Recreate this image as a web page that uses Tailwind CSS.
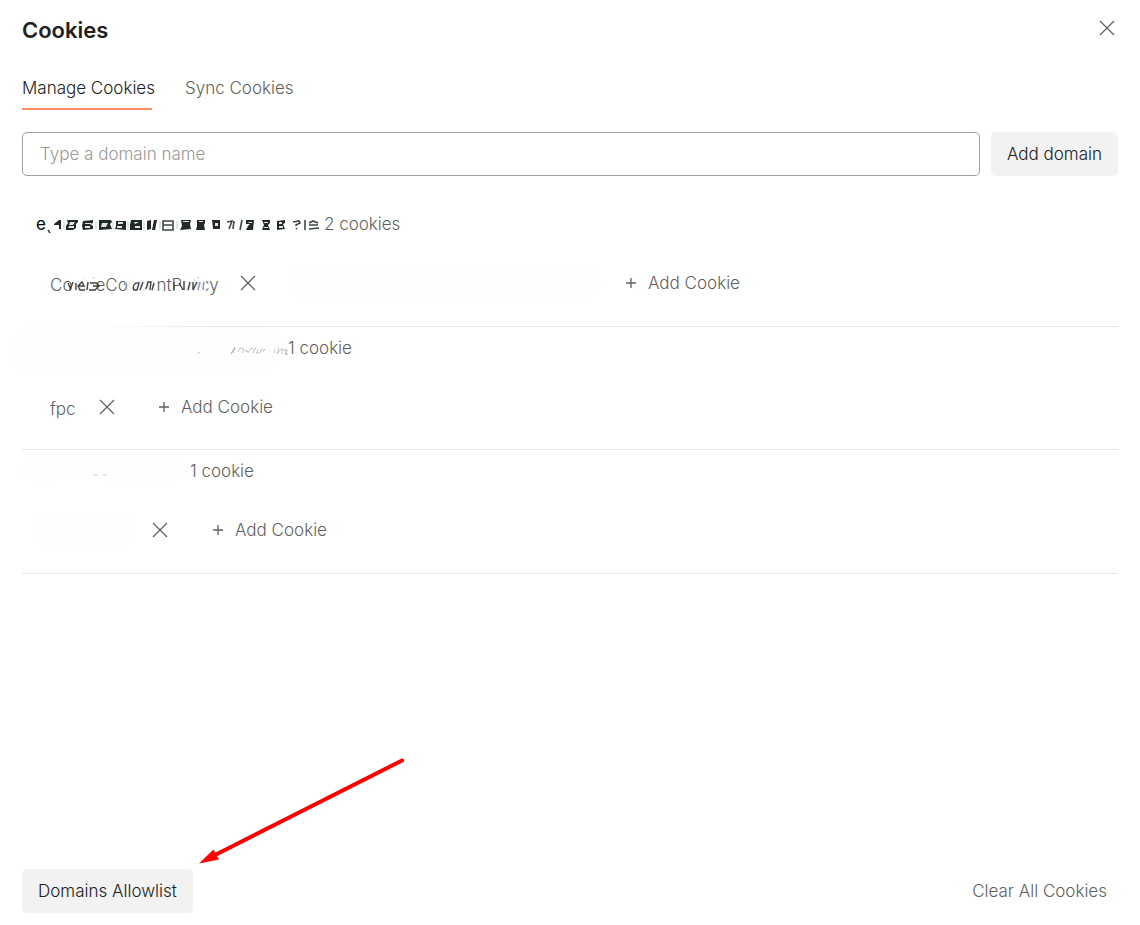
<!DOCTYPE html>
<html lang="en">
<head>
<meta charset="utf-8">
<meta name="viewport" content="width=device-width, initial-scale=1">
<title>Cookies</title>
<script src="https://cdn.jsdelivr.net/npm/@tailwindcss/browser@4"></script>
</head>
<body class="bg-white">
<svg class="hidden" aria-hidden="true">
  <symbol id="close" viewBox="0 0 16 16"><path d="M1 1L15 15M15 1L1 15" fill="none" stroke="currentColor" stroke-width="1.2"/></symbol>
  <symbol id="plus" viewBox="0 0 12 12"><path d="M6 1V11M1 6H11" fill="none" stroke="currentColor" stroke-width="1.3"/></symbol>
</svg>
<main class="relative flex min-h-screen flex-col bg-white px-[22px] pt-4 pb-3 font-['Inter',sans-serif] text-[17px] leading-6 font-light text-[#5f5f5f]">
  <header class="flex items-start justify-between">
    <h1 class="text-[22px] leading-7 font-semibold text-[#212121]">Cookies</h1>
    <button class="py-1 pr-[3px] pl-1" aria-label="Close"><svg class="size-4"><use href="#close"/></svg></button>
  </header>

  <nav class="mt-8 flex gap-[33px] whitespace-nowrap">
    <a href="#manage" class="w-[130px] border-b-2 border-[#ff8a65] pb-2 text-[#212121]" aria-current="page">Manage Cookies</a>
    <a href="#sync">Sync Cookies</a>
  </nav>

  <form class="mt-[22px] flex gap-[11px]">
    <input type="text" aria-label="Domain name" placeholder="Type a domain name" class="h-11 min-w-0 flex-1 rounded-[5px] border border-[#a0a0a0] px-[17px] text-[#212121] placeholder:text-[#999]">
    <button type="button" class="h-11 rounded-[5px] bg-[#f2f2f2] px-4 text-[#212121]">Add domain</button>
  </form>

  <div class="mt-[27px]">
    <section class="border-b border-[#e6e6e6] pt-[9px] pb-[31px]">
      <div class="flex items-center pl-[14px]">
        <span class="font-normal text-black">e</span>
        <svg class="mr-[3px] h-6 w-[275px]" viewBox="46 212 275 24" role="img" aria-label="Hidden domain">
          <g class="blur-[0.4px]">
            <path fill="#222a27" d="M54 224l5-4 2 0v9h-2v-4h-5zM67 220h11v2l-2 2v4l-3 2h-7v-4l2-3zM83 221l10-1v3l-3 1 3 2v3l-10 1-1-4zM99 220h12l1 2-2 2 2 5-13 1v-5zM116 221h10v9l-11-1 1-3zM131 220h11v10h-12v-5zM147 221l4-1v9l-4 1zM154 220h3l-2 10h-3zM181 220h10l-1 4 1 5-11 1 2-4zM197 220h8v3l-1 2 1 5h-9l1-4zM212 220h8v9h-7zM246 220h8l-1 10h-7l2-4 2-2h-4zM262 220h8v3l-2 2 2 5h-8l2-5zM277 221l8-1v3l-2 1 2 5-8 1v-4z"/>
            <path fill="none" stroke="#3c4541" stroke-width="1.6" d="M48 230l2 3M163 221h10v9h-10zM163 225h9M227 222l5-1-3 8M234 221l-1 8M242 220l-2 10M293 222l6-1 1 2-4 2v1M296 228l1 1M305 220v10M309 223l4-2 5 2M309 225h9M309 229l10-1"/>
            <path d="M70 222l5 0-2 3h-4zM69 226h5v2h-6zM85 223h6v1h-6zM85 226h5v2h-5zM102 223h6l-2 4h-5zM118 222h5v2h-5zM117 226h5v2h-5zM134 222h5l-4 2zM135 226h5v2h-5zM183 221h6v1h-6zM199 221h4v1h-4zM215 223h3v3h-3zM249 222h3v1h-4zM264 222h4v1h-4zM264 227h4v1h-4zM279 222h3v2h-3zM279 226h4v2h-4z" fill="#dfe7e3"/>
            <path d="M64 222v7M96 222v7M113 221v8M128 222v8M144 222v7M160 221v8M177 221v8" stroke="#c4cec8"/>
          </g>
        </svg>
        <span>2 cookies</span>
      </div>
      <div class="mt-[35px] flex h-6 items-center pl-7">
        <span class="relative mt-1 block w-[166px]">
          <span>CookieConsentPolicy</span>
          <svg class="absolute inset-0 size-full" viewBox="0 0 166 24" aria-hidden="true">
            <path d="M22 5h23v14H22zM79 4h27v15H79zM131 5h25v15H131z" fill="#fff" fill-opacity=".85"/>
            <g class="blur-[0.4px]" fill="none" stroke="#444" stroke-width="1.4">
              <path d="M18 10l3 7M23 9l-3 8M26 10v7M28 13h6l-2-4-4 4 2 4h5M38 9l-1 8M40 10h7l2 3-4 4h-6M43 13h7"/>
              <path d="M76 9l-2 3" stroke="#aaa"/><path d="M84 17c-2-3 0-8 5-7l-2 7zM93 9l-3 8M96 16l2-7h3l-1 8M104 10l-2 7"/>
              <path d="M124 9v8M129 10l4 7M134 8v9M138 17l2-8M143 9v8l4-8"/><path d="M150 9l-2 8M154 9l-1 8" stroke="#8499c0"/>
            </g>
          </svg>
        </span>
        <button class="ml-6" aria-label="Delete cookie"><svg class="block size-4"><use href="#close"/></svg></button>
        <span class="ml-8 h-8 w-[313px] rounded-full bg-[#fefefe]"></span>
        <button class="ml-6 flex items-center gap-[11px]"><svg class="size-3"><use href="#plus"/></svg>Add Cookie</button>
      </div>
    </section>

    <section class="relative border-b border-[#e6e6e6] pt-[9px] pb-[30px]">
      <span class="absolute top-0 -left-3 h-12 w-[270px] rounded-full bg-[#fefefe]"></span>
      <span class="absolute -top-px left-0 h-px w-48 bg-linear-to-r from-white from-40% to-transparent"></span>
      <div class="relative flex items-center">
        <svg class="h-6 w-[266px]" viewBox="22 336 266 24" role="img" aria-label="Hidden domain">
          <path d="M197 354l3-2M233 353l2-5M238 352l2-4 4 1-2 4M248 353l3-5 3 1M256 347l-3 6M259 349l-3 4h4l2-5M274 349l1 4M279 348l-2 6 5-6v6" fill="none" stroke="#c5c5bf"/>
          <path d="M235 347l-4 7M245 351h3M263 351l2-2M283 350h4l-2 4h3" fill="none" stroke="#aaa"/>
        </svg>
        <span>1 cookie</span>
      </div>
      <div class="mt-[35px] flex h-6 items-center pl-7">
        <span class="mt-1 w-[25px]">fpc</span>
        <button class="ml-6" aria-label="Delete cookie"><svg class="block size-4"><use href="#close"/></svg></button>
        <button class="ml-[43px] flex items-center gap-[11px]"><svg class="size-3"><use href="#plus"/></svg>Add Cookie</button>
      </div>
    </section>

    <section class="border-b border-[#e6e6e6] pt-[9px] pb-[31px]">
      <div class="flex items-center">
        <svg class="h-6 w-[168px]" viewBox="22 460 168 24" role="img" aria-label="Hidden domain">
          <path d="M22 472q0-12 14-12h130q18 0 18 12t-18 12h-42l-28-4-60 2q-14 0-14-10z" fill="#fefefe"/>
          <path d="M93 476h5M103 476h4" stroke="#ccc"/>
        </svg>
        <span>1 cookie</span>
      </div>
      <div class="mt-[35px] flex h-6 items-center pl-[10px]">
        <span class="h-9 w-[104px] rounded-full bg-[#fefefe]"></span>
        <button class="ml-4" aria-label="Delete cookie"><svg class="block size-4"><use href="#close"/></svg></button>
        <button class="ml-11 flex items-center gap-[11px]"><svg class="size-3"><use href="#plus"/></svg>Add Cookie</button>
      </div>
    </section>
  </div>

  <footer class="relative mt-auto flex items-center justify-between">
    <button class="h-11 rounded-[5px] bg-[#f2f2f2] px-4 text-[#212121]">Domains Allowlist</button>
    <button class="mr-[11px]">Clear All Cookies</button>
    <svg class="absolute bottom-11 left-[170px] h-[120px] w-[220px]" viewBox="192 749 220 120" aria-hidden="true">
      <path d="M402 760.500L213 856" stroke="#f00" stroke-width="4" stroke-linecap="round"/>
      <path d="M199 863.500L213.500 849.500L215.500 853.500L219 859.500Z" fill="#f00"/>
    </svg>
  </footer>
</main>
</body>
</html>
